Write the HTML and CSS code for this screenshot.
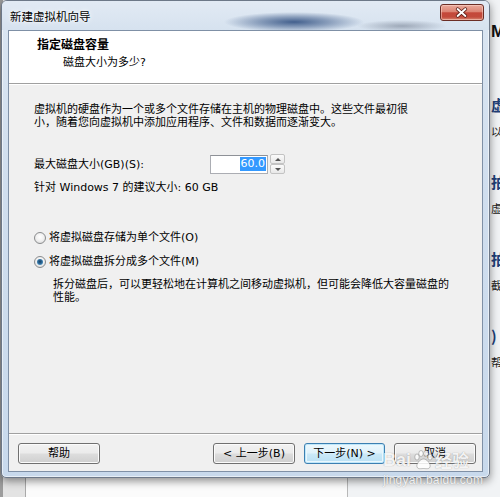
FILE: index.html
```html
<!DOCTYPE html>
<html lang="zh-CN">
<head>
<meta charset="utf-8">
<title>新建虚拟机向导</title>
<link rel="stylesheet" href="styles.css">
</head>
<body>
<div class="desktop">
  <div class="bgwin">
    <div class="bg-side"></div>
    <div class="bg-main"></div>
    <div class="bg-right">
      <div class="bg-m">M</div>
      <div class="bg-sec first"><div class="bg-h">虚</div><div class="bg-d">以</div></div>
      <div class="bg-sec"><div class="bg-h">拍</div><div class="bg-d">虚</div></div>
      <div class="bg-sec"><div class="bg-h">拍</div><div class="bg-d">截</div></div>
      <div class="bg-sec"><div class="bg-h">)</div><div class="bg-d">帮</div></div>
    </div>
  </div>

  <div class="window">
    <div class="titlebar">
      <span class="title">新建虚拟机向导</span>
      <div class="close">
        <svg width="44" height="17" viewBox="0 0 44 17">
          <path d="M18 5 L26 12 M26 5 L18 12" stroke="#5a1d16" stroke-width="3.6" stroke-linecap="round" fill="none"/>
          <path d="M18 5 L26 12 M26 5 L18 12" stroke="#ffffff" stroke-width="2" stroke-linecap="round" fill="none"/>
        </svg>
      </div>
    </div>
    <div class="client">
      <div class="header">
        <div class="h-title">指定磁盘容量</div>
        <div class="h-sub">磁盘大小为多少?</div>
      </div>
      <div class="content">
        <p class="intro">虚拟机的硬盘作为一个或多个文件存储在主机的物理磁盘中。这些文件最初很<br>小，随着您向虚拟机中添加应用程序、文件和数据而逐渐变大。</p>
        <div class="size-row">
          <span class="size-label">最大磁盘大小(GB)(S):</span>
          <div class="spin-input"><span class="sel">60.0</span></div>
          <div class="spinner"><span class="sp up"></span><span class="sp down"></span></div>
        </div>
        <p class="recommend">针对 Windows 7 的建议大小: 60 GB</p>
        <div class="radio-row first"><span class="radio"></span><span>将虚拟磁盘存储为单个文件(O)</span></div>
        <div class="radio-row"><span class="radio checked"></span><span>将虚拟磁盘拆分成多个文件(M)</span></div>
        <p class="radio-desc">拆分磁盘后，可以更轻松地在计算机之间移动虚拟机，但可能会降低大容量磁盘的<br>性能。</p>
      </div>
      <div class="footer">
        <button class="btn">帮助</button>
        <div class="spacer"></div>
        <button class="btn">&lt; 上一步(B)</button>
        <button class="btn default">下一步(N) &gt;</button>
        <button class="btn">取消</button>
      </div>
    </div>
  </div>

  <div class="watermark">
    <div class="wm-logo">
      <span>Bai</span>
      <svg class="paw" width="22" height="20" viewBox="0 0 22 20">
        <g fill="rgba(255,255,255,0.85)" stroke="rgba(90,90,90,0.45)" stroke-width="0.8">
          <ellipse cx="5" cy="7" rx="2.2" ry="3"/>
          <ellipse cx="9" cy="3.5" rx="2.2" ry="3"/>
          <ellipse cx="14" cy="3.5" rx="2.2" ry="3"/>
          <ellipse cx="18" cy="7" rx="2.2" ry="3"/>
          <path d="M11.5 9 C15 9 19 14 18 17 C17 19.5 14 18.5 11.5 18.5 C9 18.5 6 19.5 5 17 C4 14 8 9 11.5 9 Z"/>
        </g>
      </svg>
      <span class="wm-cn">经验</span>
    </div>
    <div class="wm-url">jingyan.baidu.com</div>
  </div>
</div>
</body>
</html>
```

FILE: styles.css
```css
* { box-sizing: border-box; }

html, body {
  margin: 0;
  padding: 0;
}

body {
  width: 500px;
  height: 497px;
  overflow: hidden;
  font-family: "DejaVu Sans", "Noto Sans CJK SC", sans-serif;
  font-size: 11px;
  line-height: 13px;
  color: #000;
  background: #f4f4f4;
}

.desktop {
  position: relative;
  width: 500px;
  height: 497px;
  overflow: hidden;
}

/* background window */
.bgwin {
  display: flex;
  height: 100%;
  background: #f7f7f7;
}
.bg-side {
  width: 26px;
  border-left: 3px solid #9c9c9c;
  border-right: 1px solid #a9a9a9;
  background: #e3e3e3;
}
.bg-main {
  width: 322px;
  border-right: 1px solid #b8b8b8;
  background: #fbfbfb;
}
.bg-right {
  flex: 1;
  padding-left: 143px;
  background: #f1f3f5;
  overflow: hidden;
}
.bg-m {
  margin-top: 24px;
  font: bold 17px/16px "Liberation Sans", sans-serif;
  color: #111;
}
.bg-sec { margin-top: 38px; }
.bg-sec.first { margin-top: 58px; }
.bg-h {
  font: bold 15px/14px "Noto Sans CJK SC", sans-serif;
  color: #1f3f78;
}
.bg-d {
  margin-top: 13px;
  font: 11px/12px "Noto Sans CJK SC", sans-serif;
  color: #222;
}

/* main window */
.window {
  position: absolute;
  left: 1px;
  top: 0;
  width: 489px;
  height: 478px;
  display: flex;
  flex-direction: column;
  border: 1px solid #6d7888;
  border-radius: 6px 6px 5px 5px;
  background: linear-gradient(180deg, #dbe6f2 0%, #d0deee 40%, #c8d9ec 100%);
  box-shadow: inset 0 0 0 1px rgba(255,255,255,0.55), 0 3px 9px rgba(0,0,0,0.45);
}

.titlebar {
  height: 29px;
  flex: none;
  display: flex;
  align-items: flex-start;
  border-radius: 5px 5px 0 0;
  background:
    radial-gradient(ellipse 70px 10px at 292px 21px, rgba(58,88,135,0.95), rgba(58,88,135,0.5) 50%, rgba(58,88,135,0) 100%),
    radial-gradient(ellipse 45px 6px at 400px 25px, rgba(70,80,100,0.4), rgba(70,80,100,0) 100%),
    linear-gradient(180deg, #e2eaf4 0%, #d6e2ef 100%);
}
.title {
  padding: 9px 0 0 8px;
  font-size: 11.5px;
  line-height: 14px;
  color: #000;
  text-shadow: 0 0 6px #fff, 0 0 3px #fff;
}
.close {
  margin: 3px 5px 0 auto;
  width: 44px;
  height: 17px;
  border: 1px solid #6b2e26;
  border-radius: 3px;
  background: linear-gradient(180deg, #eaa99c 0%, #dc8574 45%, #c4483a 52%, #c24b3c 80%, #d98a74 100%);
  box-shadow: inset 0 0 0 1px rgba(255,220,210,0.5);
  display: flex;
}
.close svg { margin: -1px 0 0 -1px; }

.client {
  flex: 1;
  margin: 0 6px 5px 6px;
  border: 1px solid #7f90a6;
  background: #f0f0f0;
  display: flex;
  flex-direction: column;
}

.header {
  flex: none;
  background: #fff;
  padding: 7px 0 13px 28px;
  border-bottom: 1px solid #a0a0a0;
}
.h-title {
  font-weight: bold;
  font-size: 12px;
  line-height: 14px;
}
.h-sub {
  margin-top: 4px;
  padding-left: 26px;
  line-height: 14px;
}

.content {
  flex: 1;
  border-top: 1px solid #fff;
  padding: 18px 0 0 25px;
}
.intro { margin: 0; }

.size-row {
  margin-top: 25px;
  height: 20px;
  display: flex;
  align-items: center;
}
.size-label { width: 176px; }
.spin-input {
  width: 58px;
  height: 19px;
  border: 1px solid #abadb3;
  border-top-color: #8e9197;
  background: #fff;
  display: flex;
  justify-content: flex-end;
  align-items: center;
  padding-right: 1px;
}
.sel {
  background: #3399ff;
  color: #fff;
  padding: 0 1px;
  line-height: 14px;
}
.spinner {
  margin-left: 2px;
  width: 15px;
  height: 20px;
  display: flex;
  flex-direction: column;
}
.sp {
  flex: 1;
  border: 1px solid #c3c3c3;
  border-radius: 2px;
  background: linear-gradient(180deg, #fbfbfb, #e8e8e8);
  display: flex;
  align-items: center;
  justify-content: center;
}
.sp::after {
  content: "";
  border-left: 3px solid transparent;
  border-right: 3px solid transparent;
}
.up::after { border-bottom: 3px solid #555; }
.down::after { border-top: 3px solid #555; }

.recommend { margin: 7px 0 0; }

.radio-row {
  height: 16px;
  line-height: 16px;
  display: flex;
  align-items: center;
  margin-top: 8px;
}
.radio-row.first { margin-top: 36px; }
.radio {
  width: 12px;
  height: 12px;
  margin-right: 3px;
  border: 1px solid #8a8c8e;
  border-radius: 50%;
  background: radial-gradient(circle at 50% 40%, #ffffff 0%, #f0f0f0 50%, #d2d2d2 100%);
  display: flex;
  align-items: center;
  justify-content: center;
}
.radio.checked::after {
  content: "";
  width: 6px;
  height: 6px;
  border-radius: 50%;
  background: radial-gradient(circle at 50% 45%, #173f63 0%, #2d6a99 45%, #6fb4de 100%);
}
.radio-desc { margin: 8px 0 0 19px; }

.footer {
  flex: none;
  height: 38px;
  display: flex;
  align-items: flex-start;
  padding: 9px 6px 0 9px;
  border-top: 1px solid #a0a0a0;
  box-shadow: inset 0 1px 0 #fff;
}
.spacer { flex: 1; }
.btn {
  width: 82px;
  height: 21px;
  padding: 0;
  margin: 0;
  font: inherit;
  line-height: 13px;
  color: #000;
  border: 1px solid #707070;
  border-radius: 3px;
  background: linear-gradient(180deg, #f2f2f2 0%, #ebebeb 48%, #dddddd 52%, #cfcfcf 100%);
  box-shadow: inset 0 0 0 1px #fbfbfb;
}
.btn.default {
  width: 81px;
  margin-left: 9px;
  border-color: #3c7fb1;
  background: linear-gradient(180deg, #eef8fd 0%, #dff2fb 48%, #cbe9f8 52%, #b9e0f4 100%);
  box-shadow: inset 0 0 0 1px #bfe7fa, inset 0 0 0 2px #eaf7fd;
}
.btn.default + .btn { margin-left: 9px; }

/* watermark overlay */
.watermark {
  position: absolute;
  left: 383px;
  top: 450px;
  color: rgba(255,255,255,0.88);
  text-shadow: 0 0 1px rgba(60,60,60,0.45);
}
.wm-logo {
  display: flex;
  align-items: center;
  height: 20px;
  font: bold 18px/20px "Liberation Sans", sans-serif;
}
.paw { margin: 0 1px; }
.wm-cn {
  font: bold 17px/20px "Noto Sans CJK SC", sans-serif;
}
.wm-url {
  margin-top: 4px;
  font: 12px/12px "Liberation Sans", sans-serif;
  letter-spacing: 0.2px;
}
```
